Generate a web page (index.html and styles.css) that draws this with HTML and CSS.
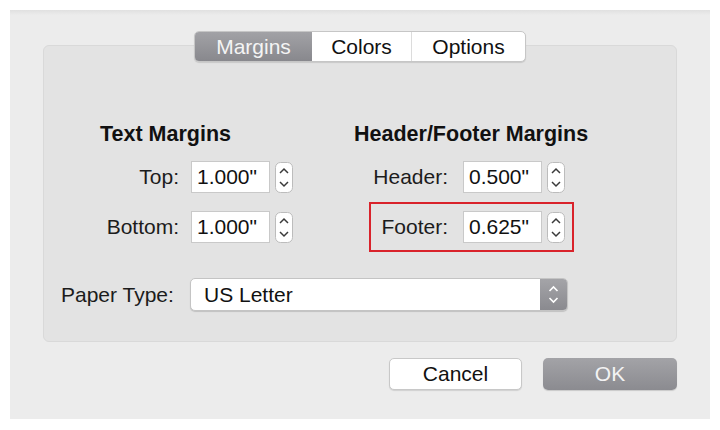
FILE: index.html
```
<!DOCTYPE html>
<html>
<head>
	<title>Page Setup</title>
	<link rel="stylesheet" href="styles.css">
</head>
<body>

	<!-- Dialog window -->
	<div class="window">

		<!-- Segmented tab control -->
		<div class="tabs">
			<span class="tab tab-margins selected">Margins</span>
			<span class="tab tab-colors">Colors</span>
			<span class="tab tab-options">Options</span>
		</div>

		<!-- Group box with the margin settings -->
		<div class="group">
			<div class="columns">

				<div class="column text-col">
					<h2>Text Margins</h2>
					<div class="row">
						<label for="top">Top:</label>
						<input type="text" id="top" value='1.000"'>
						<svg class="stepper" width="18" height="31" viewBox="0 0 18 31">
							<rect x="0.5" y="0.5" width="17" height="30" rx="5" fill="#fff" stroke="#bcbcbc"/>
							<polyline points="5,11 9,7 13,11" fill="none" stroke="#3a3a3a" stroke-width="1.5"/>
							<polyline points="5,20 9,24 13,20" fill="none" stroke="#3a3a3a" stroke-width="1.5"/>
						</svg>
					</div>
					<div class="row">
						<label for="bottom">Bottom:</label>
						<input type="text" id="bottom" value='1.000"'>
						<svg class="stepper" width="18" height="31" viewBox="0 0 18 31">
							<rect x="0.5" y="0.5" width="17" height="30" rx="5" fill="#fff" stroke="#bcbcbc"/>
							<polyline points="5,11 9,7 13,11" fill="none" stroke="#3a3a3a" stroke-width="1.5"/>
							<polyline points="5,20 9,24 13,20" fill="none" stroke="#3a3a3a" stroke-width="1.5"/>
						</svg>
					</div>
				</div>

				<div class="column hf-col">
					<h2>Header/Footer Margins</h2>
					<div class="row">
						<label for="header">Header:</label>
						<input type="text" id="header" value='0.500"'>
						<svg class="stepper" width="18" height="31" viewBox="0 0 18 31">
							<rect x="0.5" y="0.5" width="17" height="30" rx="5" fill="#fff" stroke="#bcbcbc"/>
							<polyline points="5,11 9,7 13,11" fill="none" stroke="#3a3a3a" stroke-width="1.5"/>
							<polyline points="5,20 9,24 13,20" fill="none" stroke="#3a3a3a" stroke-width="1.5"/>
						</svg>
					</div>
					<div class="row highlight">
						<label for="footer">Footer:</label>
						<input type="text" id="footer" value='0.625"'>
						<svg class="stepper" width="18" height="31" viewBox="0 0 18 31">
							<rect x="0.5" y="0.5" width="17" height="30" rx="5" fill="#fff" stroke="#bcbcbc"/>
							<polyline points="5,11 9,7 13,11" fill="none" stroke="#3a3a3a" stroke-width="1.5"/>
							<polyline points="5,20 9,24 13,20" fill="none" stroke="#3a3a3a" stroke-width="1.5"/>
						</svg>
					</div>
				</div>

			</div>

			<!-- Paper type popup -->
			<div class="paper-row">
				<span class="paper-label">Paper Type:</span>
				<div class="popup">
					<span class="popup-value">US Letter</span>
					<span class="popup-arrows">
						<svg width="27" height="31" viewBox="0 0 27 31">
							<polyline points="9.5,12 13.5,8 17.5,12" fill="none" stroke="#fff" stroke-width="1.6"/>
							<polyline points="9.5,19 13.5,23 17.5,19" fill="none" stroke="#fff" stroke-width="1.6"/>
						</svg>
					</span>
				</div>
			</div>
		</div>

		<!-- Dialog buttons -->
		<div class="buttons">
			<button class="btn btn-cancel">Cancel</button>
			<button class="btn btn-ok">OK</button>
		</div>

	</div>

</body>
</html>
```

FILE: styles.css
```
/* Page */
body {
	margin: 0;
	background-color: #fff;
	font-family: "Liberation Sans", Arial, sans-serif;
	font-size: 21px;
	color: #1c1c1c;
}

/* Dialog window */
.window {
	margin: 10px;
	width: 700px;
	height: 409px;
	box-sizing: border-box;
	padding-top: 21px;
	background: linear-gradient(#e0e0e0, #ececec 5px);
	display: flex;
	flex-direction: column;
}

/* Segmented tab control */
.tabs {
	align-self: center;
	display: flex;
	height: 31px;
	box-sizing: border-box;
	border: 1px solid #c6c6c6;
	border-radius: 5px;
	background-color: #fff;
	box-shadow: 0 1px 1px rgba(0, 0, 0, 0.12);
	margin-bottom: -17px;
	position: relative;
	z-index: 1;
	overflow: hidden;
}

.tab {
	display: flex;
	align-items: center;
	justify-content: center;
	line-height: 1;
	color: #111;
}

.tab-margins {
	width: 117px;
}

.tab-colors {
	width: 99px;
	border-right: 1px solid #dcdcdc;
}

.tab-options {
	width: 113px;
}

.tab.selected {
	background: linear-gradient(#a2a2a6, #88888d);
	color: #f4f4f4;
}

/* Group box */
.group {
	margin: 0 33px;
	padding: 76px 0 30px;
	background-color: #e3e3e3;
	border: 1px solid #d9d9d9;
	border-radius: 6px;
}

.columns {
	display: flex;
	padding-left: 56px;
}

.column h2 {
	margin: 0 0 15px;
	font-size: 21.5px;
	line-height: 24px;
	font-weight: bold;
	color: #111;
}

.text-col {
	width: 193px;
}

.hf-col {
	margin-left: 61px;
}

/* Field rows */
.row {
	display: flex;
	align-items: center;
	width: fit-content;
	height: 32px;
	margin-bottom: 18px;
	position: relative;
}

.row label {
	text-align: right;
}

.text-col .row label {
	width: 79px;
	margin-right: 12px;
}

.hf-col .row label {
	width: 94px;
	margin-right: 15px;
}

.row input {
	width: 79px;
	height: 32px;
	box-sizing: border-box;
	padding: 0 0 0 5px;
	border: 1px solid #c9c9c9;
	background-color: #fff;
	font: inherit;
	color: #111;
	outline: none;
}

.stepper {
	margin-left: 5px;
	display: block;
}

/* Red annotation box round the footer row */
.row.highlight::after {
	content: "";
	position: absolute;
	left: 15px;
	right: -9px;
	top: -9px;
	bottom: -9px;
	border: 2px solid #d9232b;
}

/* Paper type row */
.paper-row {
	display: flex;
	align-items: center;
	margin-top: 17px;
	padding-left: 17px;
}

.paper-label {
	width: 114px;
	margin-right: 15px;
}

.popup {
	display: flex;
	width: 378px;
	height: 33px;
	box-sizing: border-box;
	border: 1px solid #c4c4c4;
	border-radius: 5px;
	background-color: #fff;
	box-shadow: 0 1px 1px rgba(0, 0, 0, 0.15);
	overflow: hidden;
}

.popup-value {
	flex: 1;
	display: flex;
	align-items: center;
	padding-left: 13px;
	color: #111;
}

.popup-arrows {
	width: 27px;
	background: linear-gradient(#a4a4a8, #8a8a8f);
	display: flex;
	align-items: center;
}

/* Dialog buttons */
.buttons {
	display: flex;
	justify-content: flex-end;
	gap: 21px;
	margin-top: 16px;
	padding-right: 33px;
}

.btn {
	height: 32px;
	box-sizing: border-box;
	border-radius: 5px;
	font: inherit;
	padding: 0;
	cursor: pointer;
}

.btn-cancel {
	width: 133px;
	background-color: #fff;
	border: 1px solid #c8c8c8;
	box-shadow: 0 1px 1px rgba(0, 0, 0, 0.12);
	color: #111;
}

.btn-ok {
	width: 134px;
	border: none;
	background: linear-gradient(#a3a3a7, #8b8b90);
	box-shadow: 0 1px 1px rgba(0, 0, 0, 0.15);
	color: #f3f3f3;
}
```
